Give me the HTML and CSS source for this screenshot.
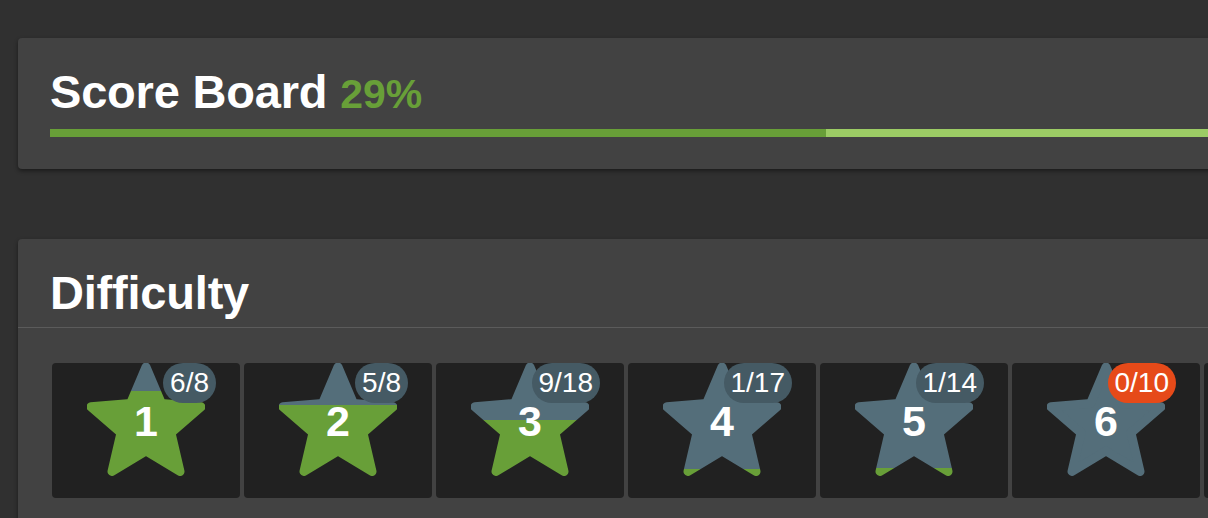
FILE: index.html
```html
<!DOCTYPE html>
<html>
<head>
<meta charset="utf-8">
<link rel="stylesheet" href="styles.css">
</head>
<body>
<div class="page">
  <section class="card score">
    <h1 class="title">Score Board <span class="pct">29%</span></h1>
    <div class="bar"><div class="bar-fill" style="width:29%"></div></div>
  </section>

  <section class="card difficulty">
    <h2 class="title head">Difficulty</h2>
    <div class="tiles">
      <div class="tile">
        <svg class="star" viewBox="0 0 118 113"><defs><linearGradient id="g1" gradientUnits="userSpaceOnUse" x1="0" y1="113" x2="0" y2="0"><stop offset="0.75" stop-color="#689f38"/><stop offset="0.75" stop-color="#546e7a"/></linearGradient></defs><polygon fill="url(#g1)" stroke="url(#g1)" points="59,4 74.46,40.47 114,43.82 83.97,69.84 92.99,108.5 59,87.99 25.01,108.5 34.03,69.84 4,43.82 43.55,40.47"/></svg>
        <span class="num">1</span>
        <span class="badge">6/8</span>
      </div>
      <div class="tile">
        <svg class="star" viewBox="0 0 118 113"><defs><linearGradient id="g2" gradientUnits="userSpaceOnUse" x1="0" y1="113" x2="0" y2="0"><stop offset="0.625" stop-color="#689f38"/><stop offset="0.625" stop-color="#546e7a"/></linearGradient></defs><polygon fill="url(#g2)" stroke="url(#g2)" points="59,4 74.46,40.47 114,43.82 83.97,69.84 92.99,108.5 59,87.99 25.01,108.5 34.03,69.84 4,43.82 43.55,40.47"/></svg>
        <span class="num">2</span>
        <span class="badge">5/8</span>
      </div>
      <div class="tile">
        <svg class="star" viewBox="0 0 118 113"><defs><linearGradient id="g3" gradientUnits="userSpaceOnUse" x1="0" y1="113" x2="0" y2="0"><stop offset="0.5" stop-color="#689f38"/><stop offset="0.5" stop-color="#546e7a"/></linearGradient></defs><polygon fill="url(#g3)" stroke="url(#g3)" points="59,4 74.46,40.47 114,43.82 83.97,69.84 92.99,108.5 59,87.99 25.01,108.5 34.03,69.84 4,43.82 43.55,40.47"/></svg>
        <span class="num">3</span>
        <span class="badge">9/18</span>
      </div>
      <div class="tile">
        <svg class="star" viewBox="0 0 118 113"><defs><linearGradient id="g4" gradientUnits="userSpaceOnUse" x1="0" y1="113" x2="0" y2="0"><stop offset="0.059" stop-color="#689f38"/><stop offset="0.059" stop-color="#546e7a"/></linearGradient></defs><polygon fill="url(#g4)" stroke="url(#g4)" points="59,4 74.46,40.47 114,43.82 83.97,69.84 92.99,108.5 59,87.99 25.01,108.5 34.03,69.84 4,43.82 43.55,40.47"/></svg>
        <span class="num">4</span>
        <span class="badge">1/17</span>
      </div>
      <div class="tile">
        <svg class="star" viewBox="0 0 118 113"><defs><linearGradient id="g5" gradientUnits="userSpaceOnUse" x1="0" y1="113" x2="0" y2="0"><stop offset="0.071" stop-color="#689f38"/><stop offset="0.071" stop-color="#546e7a"/></linearGradient></defs><polygon fill="url(#g5)" stroke="url(#g5)" points="59,4 74.46,40.47 114,43.82 83.97,69.84 92.99,108.5 59,87.99 25.01,108.5 34.03,69.84 4,43.82 43.55,40.47"/></svg>
        <span class="num">5</span>
        <span class="badge">1/14</span>
      </div>
      <div class="tile">
        <svg class="star" viewBox="0 0 118 113"><polygon fill="#546e7a" stroke="#546e7a" points="59,4 74.46,40.47 114,43.82 83.97,69.84 92.99,108.5 59,87.99 25.01,108.5 34.03,69.84 4,43.82 43.55,40.47"/></svg>
        <span class="num">6</span>
        <span class="badge zero">0/10</span>
      </div>
      <div class="tile"></div>
    </div>
  </section>
</div>
</body>
</html>
```

FILE: styles.css
```css
html, body {
  margin: 0;
  padding: 0;
  background: #303030;
  overflow: hidden;
  font-family: "Liberation Sans", Arial, Helvetica, sans-serif;
  color: #fff;
}

.page {
  width: 2740px;
  padding: 38px 0 0 18px;
  display: flex;
  flex-direction: column;
  gap: 70px;
}

.card {
  background: #424242;
  border-radius: 4px;
  box-shadow: 0 2px 4px rgba(0, 0, 0, 0.45);
}

.score {
  padding: 27px 32px 32px;
}

.title {
  margin: 0;
  font-size: 47px;
  line-height: 54px;
  font-weight: bold;
  letter-spacing: -0.2px;
}

.pct {
  font-size: 41px;
  line-height: 1;
  color: #689f38;
  letter-spacing: 0;
}

.bar {
  margin-top: 10px;
  height: 8px;
  width: 2676px;
  background: #9ccc65;
}

.bar-fill {
  height: 100%;
  background: #689f38;
}

.difficulty {
  padding-bottom: 40px;
}

.head {
  padding: 27px 32px 7px;
  border-bottom: 1px solid #5b5b5b;
}

.tiles {
  display: flex;
  gap: 4px;
  padding: 35px 32px 0 34px;
}

.tile {
  position: relative;
  flex: 0 0 188px;
  height: 135px;
  background: #212121;
  border-radius: 4px;
  display: flex;
  justify-content: center;
  align-items: flex-start;
}

.star {
  width: 118px;
  height: 113px;
  display: block;
}

.star polygon {
  stroke-width: 9;
  stroke-linejoin: round;
}

.num {
  position: absolute;
  left: 0;
  right: 0;
  top: 37px;
  text-align: center;
  font-size: 43px;
  line-height: 42px;
  font-weight: bold;
}

.badge {
  position: absolute;
  top: 0;
  right: 24px;
  height: 40px;
  line-height: 40px;
  padding: 0 7px;
  border-radius: 20px;
  background: #455a64;
  font-size: 28px;
}

.badge.zero {
  background: #e64a19;
}
```
